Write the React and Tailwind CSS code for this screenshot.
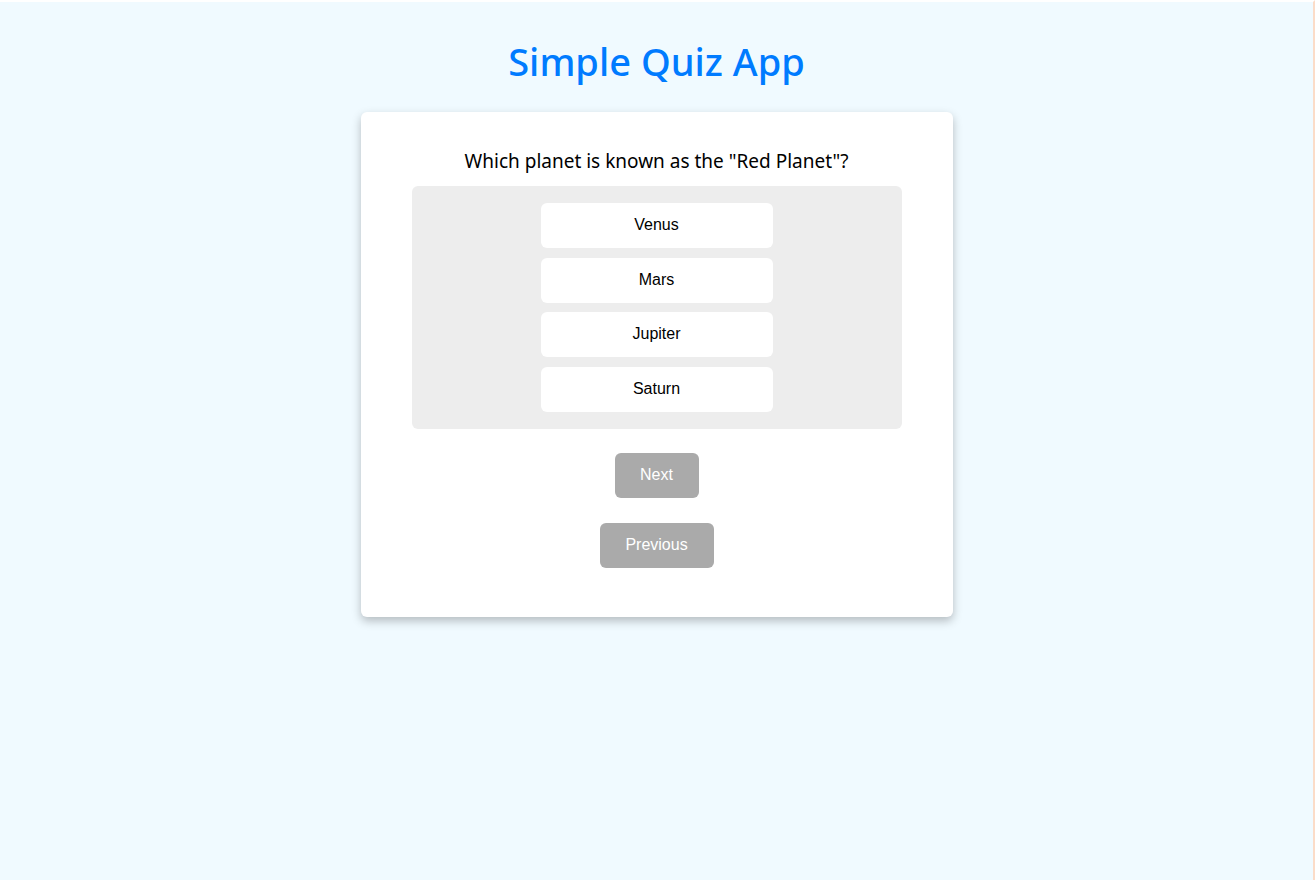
export default function App() {
  const options = ["Venus", "Mars", "Jupiter", "Saturn"];
  return (
    <div className="min-h-[880px] w-full bg-[#f0faff] border-t-2 border-t-white border-r-2 border-r-[#fbdcc8] flex flex-col items-center">
      <h1 className="mt-[34px] text-[38px] leading-[50px] text-[#007bff] font-medium font-['Noto_Sans','Open_Sans',sans-serif]">
        Simple Quiz App
      </h1>
      <div className="mt-[26px] w-[592px] h-[505px] bg-white rounded-[6px] shadow-[0_4px_10px_rgba(0,0,0,0.25)] flex flex-col items-center">
        <p className="mt-[37px] text-[19px] leading-[24px] text-black font-['Noto_Sans','Open_Sans',sans-serif]">
          Which planet is known as the "Red Planet"?
        </p>
        <div className="mt-[13px] w-[490px] bg-[#ededed] rounded-[6px] py-[17px] flex flex-col items-center gap-[9.5px]">
          {options.map((o) => (
            <button key={o} className="w-[232px] h-[45px] pb-[1px] bg-white rounded-[6px] text-[16px] text-black font-['Liberation_Sans',Arial,sans-serif]">
              {o}
            </button>
          ))}
        </div>
        <button className="mt-[24px] w-[84px] h-[45px] bg-[#aaaaaa] rounded-[6px] text-white text-[16px] font-['Liberation_Sans',Arial,sans-serif]">
          Next
        </button>
        <button className="mt-[25px] w-[114px] h-[45px] bg-[#aaaaaa] rounded-[6px] text-white text-[16px] font-['Liberation_Sans',Arial,sans-serif]">
          Previous
        </button>
      </div>
    </div>
  );
}
